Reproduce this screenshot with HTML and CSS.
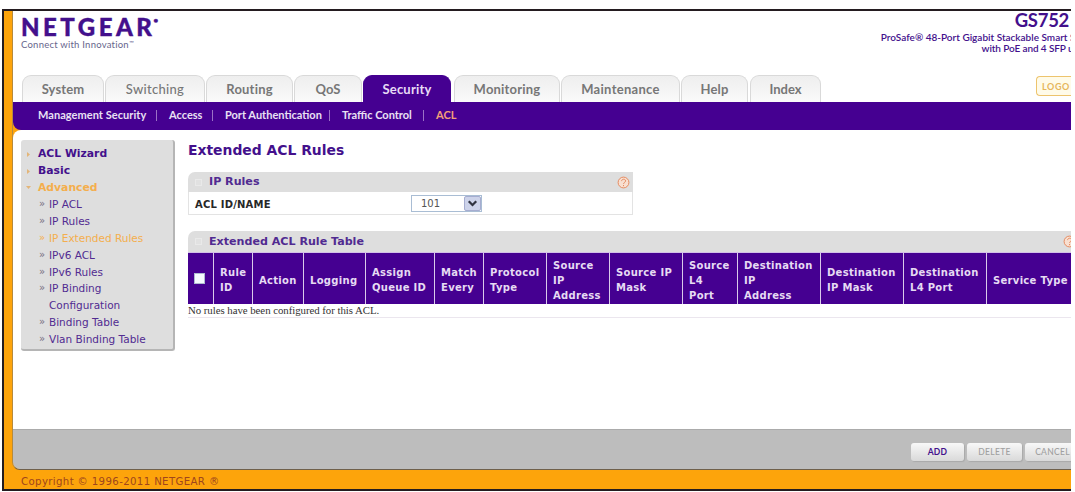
FILE: index.html
```html
<!DOCTYPE html>
<html lang="en">
<head>
<meta charset="utf-8">
<title>NETGEAR GS752</title>
<link rel="stylesheet" href="styles.css">
</head>
<body>
<div class="window">
  <div class="shell">
    <header class="header">
      <div class="brand">
        <div class="logo">NETGEAR<span class="reg">•</span></div>
        <div class="tagline">Connect with Innovation<span class="tm">™</span></div>
      </div>
      <div class="product">
        <div class="model">GS752</div>
        <div class="desc">ProSafe® 48-Port Gigabit Stackable Smart <span class="cut">S</span></div>
        <div class="desc second">with PoE and 4 SFP <span class="cut narrow">u</span></div>
      </div>
    </header>
    <div class="tabrow">
      <nav class="tabs">
        <a class="tab t-system">System</a>
        <a class="tab t-switching">Switching</a>
        <a class="tab t-routing">Routing</a>
        <a class="tab t-qos">QoS</a>
        <a class="tab t-security active">Security</a>
        <a class="tab t-monitoring">Monitoring</a>
        <a class="tab t-maintenance">Maintenance</a>
        <a class="tab t-help">Help</a>
        <a class="tab t-index">Index</a>
      </nav>
      <div class="logout">LOGO</div>
    </div>
    <nav class="subnav">
      <a class="s-management">Management Security</a><i></i>
      <a class="s-access">Access</a><i></i>
      <a class="s-port">Port Authentication</a><i></i>
      <a class="s-traffic">Traffic Control</a><i></i>
      <a class="current">ACL</a>
    </nav>
    <main class="main">
      <aside class="side">
        <div class="group"><svg viewBox="0 0 5 7"><path d="M1 1l3 2.5L1 6z"/></svg>ACL Wizard</div>
        <div class="group"><svg viewBox="0 0 5 7"><path d="M1 1l3 2.5L1 6z"/></svg>Basic</div>
        <div class="group on"><svg viewBox="0 0 5 7"><path d="M0 2h5L2.5 5z"/></svg>Advanced</div>
        <div class="link"><b>»</b>IP ACL</div>
        <div class="link"><b>»</b>IP Rules</div>
        <div class="link on"><b>»</b>IP Extended Rules</div>
        <div class="link"><b>»</b>IPv6 ACL</div>
        <div class="link"><b>»</b>IPv6 Rules</div>
        <div class="link"><b>»</b>IP Binding<br>Configuration</div>
        <div class="link"><b>»</b>Binding Table</div>
        <div class="link"><b>»</b>Vlan Binding Table</div>
      </aside>
      <section class="content">
        <h1>Extended ACL Rules</h1>
        <div class="panel">
          <div class="bar"><span class="mark"></span><span class="bar-title">IP Rules</span>
            <svg class="help" viewBox="0 0 13 13"><circle cx="6.5" cy="6.5" r="5.4"/><path d="M4.6 5.1c0-2.5 4-2.4 4-.2 0 1.5-2 1.4-2 3M6.5 9v1.2"/></svg>
          </div>
          <div class="row"><span class="label">ACL ID/NAME</span>
            <span class="select"><span class="value">101</span><span class="arrow"><svg viewBox="0 0 10 8"><path d="M2.5 2.5L5 5l2.5-2.5"/></svg></span></span>
          </div>
        </div>
        <div class="rules">
          <div class="bar"><span class="mark"></span><span class="bar-title">Extended ACL Rule Table</span>
            <svg class="help edge" viewBox="0 0 13 13"><circle cx="6.5" cy="6.5" r="5.4"/><path d="M4.6 5.1c0-2.5 4-2.4 4-.2 0 1.5-2 1.4-2 3M6.5 9v1.2"/></svg>
          </div>
          <div class="grid">
            <div class="check"><span></span></div>
            <div>Rule<br>ID</div>
            <div>Action</div>
            <div>Logging</div>
            <div>Assign<br>Queue ID</div>
            <div>Match<br>Every</div>
            <div>Protocol<br>Type</div>
            <div>Source<br>IP<br>Address</div>
            <div>Source IP<br>Mask</div>
            <div>Source<br>L4<br>Port</div>
            <div>Destination<br>IP<br>Address</div>
            <div>Destination<br>IP Mask</div>
            <div>Destination<br>L4 Port</div>
            <div>Service Type</div>
          </div>
          <div class="empty">No rules have been configured for this ACL.</div>
        </div>
      </section>
    </main>
    <div class="actions">
      <span class="btn add">ADD</span>
      <span class="btn delete">DELETE</span>
      <span class="btn cancel">CANCEL</span>
    </div>
  </div>
  <footer class="copyright">Copyright © 1996-2011 NETGEAR ®</footer>
</div>
</body>
</html>
```
FILE: styles.css
```css
* { box-sizing: border-box; }
body {
  margin: 0;
  height: 492px;
  overflow: hidden;
  background: #fff;
  font-family: "DejaVu Sans", sans-serif;
}
.window {
  width: 1069px;
  height: 482px;
  margin: 9px 0 0 2px;
  border: 2px solid #241c20;
  border-right: 0;
  background: #fda40b;
  overflow: hidden;
}
.shell {
  height: 459px;
  margin-left: 8px;
  background: linear-gradient(#fff 0 90px, #fda40b 90px);
  border-bottom: 1px solid #6f604b;
  border-left: 1px solid #b68a3d;
  border-bottom-left-radius: 8px;
  overflow: hidden;
}
.header {
  height: 65px;
  display: flex;
  justify-content: space-between;
  padding-left: 8px;
  background: #fff;
}
.logo {
  display: flex;
  height: 29px;
  font: 900 24px/31px Lato, sans-serif;
  letter-spacing: 3.5px;
  color: #43108c;
  -webkit-text-stroke: .4px #43108c;
}
.reg { font-size: 8px; line-height: 18px; margin-left: -2px; }
.tagline {
  font: 9.5px/9px Lato, sans-serif;
  letter-spacing: .23px;
  color: #67658c;
  white-space: nowrap;
}
.tm { font-size: 6px; vertical-align: 3px; line-height: 1px; }
.product { text-align: right; color: #43108c; white-space: nowrap; }
.model { font: 700 18.5px/19px Lato, sans-serif; letter-spacing: -.3px; padding-right: 2px; }
.desc { font: 600 10px/12px Lato, sans-serif; margin-top: 1px; }
.desc.second { margin-top: -1px; letter-spacing: -.1px; }
.cut { display: inline-block; width: 1px; overflow: hidden; vertical-align: top; height: 12px; }
.cut.narrow { width: 3px; }
.tabrow {
  height: 26px;
  display: flex;
  justify-content: space-between;
  padding-left: 9px;
  background: #fff;
}
.tabs { display: flex; gap: 1px; margin-top: -1px; }
.tab {
  height: 27px;
  border: 1px solid #d9d9d9;
  border-bottom: 0;
  border-radius: 9px 9px 0 0;
  background: linear-gradient(#eee, #fafafa);
  color: #777;
  font: 700 13px/26px Lato, sans-serif;
  text-align: center;
  white-space: nowrap;
}
.tab.active { background: #450091; border-color: #450091; color: #e7daf5; }
.t-system { width: 82px; letter-spacing: .15px; }
.t-switching { width: 100px; font-weight: 500; letter-spacing: .3px; }
.t-routing { width: 87px; letter-spacing: .2px; }
.t-qos { width: 68px; letter-spacing: 0; }
.t-security { width: 88px; letter-spacing: .2px; }
.t-monitoring { width: 106px; letter-spacing: .2px; margin-left: 2px; }
.t-maintenance { width: 119px; letter-spacing: .3px; }
.t-help { width: 67px; letter-spacing: .2px; }
.t-index { width: 71px; letter-spacing: 0; margin-left: 1px; }
.logout {
  width: 35px;
  height: 20px;
  overflow: hidden;
  border: 1px solid #edc46d;
  border-right: 0;
  border-radius: 4px 0 0 4px;
  background: #fffbe9;
  color: #e6b65a;
  font: 700 9px/20px Lato, sans-serif;
  letter-spacing: .6px;
  padding-left: 5px;
}
.subnav {
  height: 28px;
  display: flex;
  align-items: center;
  padding: 0 0 2px 25px;
  background: #450091;
  border-bottom-left-radius: 8px;
  color: #e9e0f4;
  font: 700 11px/20px Lato, sans-serif;
  white-space: nowrap;
}
.subnav a { flex: none; }
.subnav i { width: 1px; height: 11px; margin: 0 12px 0 9px; background: #9b72c6; }
.s-management { width: 109px; letter-spacing: .05px; }
.s-access { width: 34px; }
.s-port { width: 95px; }
.s-traffic { width: 72px; }
.current { color: #f2a078; }
.main {
  height: 299px;
  display: flex;
  align-items: flex-start;
  padding: 10px 0 0 8px;
  background: #fff;
  border-top-left-radius: 8px;
}
.side {
  flex: none;
  width: 154px;
  height: 211px;
  padding-top: 6px;
  background: #dedede;
  border-right: 2px solid #b5b5b5;
  border-bottom: 2px solid #b5b5b5;
  border-radius: 3px;
  font-size: 10.5px;
  line-height: 16.8px;
  color: #512b91;
  white-space: nowrap;
}
.group { display: flex; align-items: center; font-weight: 700; color: #43108c; font-size: 10.8px; }
.group svg { width: 5px; height: 7px; margin: 0 7px 0 5px; fill: #e3b578; }
.side .on { color: #f4ae4d; }
.link { display: flex; padding-left: 18px; }
.link b { width: 10px; font-size: 10px; font-weight: 400; color: #787083; }
.side .on b { color: #f4ae4d; }
.content { flex: none; width: 884px; margin-left: 13px; }
h1 { margin: 0; font-size: 13.9px; line-height: 20px; color: #43108c; white-space: nowrap; }
.panel { width: 445px; height: 43px; margin-top: 12px; }
.bar {
  height: 20px;
  display: flex;
  align-items: center;
  background: #dedede;
  border-radius: 7px 0 0;
}
.mark { width: 7px; height: 7px; margin: 0 7px; border: 1px solid #e9e9e9; background: #e1e1e1; }
.bar-title { font-size: 11.1px; font-weight: 700; line-height: 20px; color: #512b91; }
.help { flex: none; width: 13px; height: 13px; margin: 0 3px 0 auto; fill: #f8dfd0; stroke: #e58b61; stroke-width: 1; }
.help path { fill: none; }
.help.edge { margin-right: -4px; }
.row {
  height: 23px;
  display: flex;
  align-items: center;
  border: 1px solid #e3e3e3;
  border-top: 0;
  font-size: 10px;
  font-weight: 700;
  color: #272727;
}
.label { width: 222px; padding: 2px 0 0 6px; letter-spacing: .2px; }
.select {
  display: flex;
  width: 71px;
  height: 17px;
  border: 1px solid #a9bdd4;
  color: #555;
  font-size: 10px;
  font-weight: 400;
}
.value { width: 52px; padding-left: 9px; line-height: 15px; }
.arrow { width: 17px; height: 15px; border: 1px solid #a6add0; border-radius: 2px; background: #cdd3ea; }
.arrow svg { display: block; width: 15px; height: 13px; fill: none; stroke: #303341; stroke-width: 1.5; }
.rules { margin-top: 16px; }
.rules .bar { height: 21px; }
.grid {
  display: grid;
  grid-template-columns: 25px 39px 51px 62px 69px 49px 63px 63px 73px 55px 83px 83px 83px 85px;
  height: 52px;
  border-top: 1px solid #d3c0e8;
  background: #450091;
  font-size: 10px;
  font-weight: 700;
  line-height: 15px;
  letter-spacing: .3px;
  color: #e6dbf3;
}
.grid > div { display: flex; align-items: center; padding: 3px 0 0 6px; border-left: 1px solid #d9caea; white-space: nowrap; }
.grid > .check { padding: 0; border-left: 0; justify-content: center; }
.check span { width: 11px; height: 11px; margin-right: 3px; background: #f5faff; border: 1px solid #aebbd0; }
.empty {
  height: 14px;
  border-bottom: 1px solid #ebe6ee;
  font: 10.8px/13px "Liberation Serif", serif;
  letter-spacing: -.03px;
  color: #333;
  white-space: nowrap;
}
.actions {
  height: 40px;
  display: flex;
  gap: 3px;
  padding: 13px 0 0 898px;
  background: #bdbdbd;
  border-top: 1px solid #ababab;
}
.btn {
  flex: none;
  height: 18px;
  border-radius: 3px;
  background: linear-gradient(#f8f8f8, #d9d9d9);
  color: #a0a0a0;
  font: 500 8.5px/19px Lato, sans-serif;
  letter-spacing: .3px;
  text-align: center;
  box-shadow: 1px 1px 1px #a9a9a9;
}
.add { width: 53px; color: #43108c; font-weight: 700; }
.delete { width: 55px; }
.cancel { width: 55px; }
.copyright {
  padding: 3px 0 0 17px;
  color: #a0461c;
  font-size: 10.2px;
  letter-spacing: .36px;
  line-height: 18px;
}
```
